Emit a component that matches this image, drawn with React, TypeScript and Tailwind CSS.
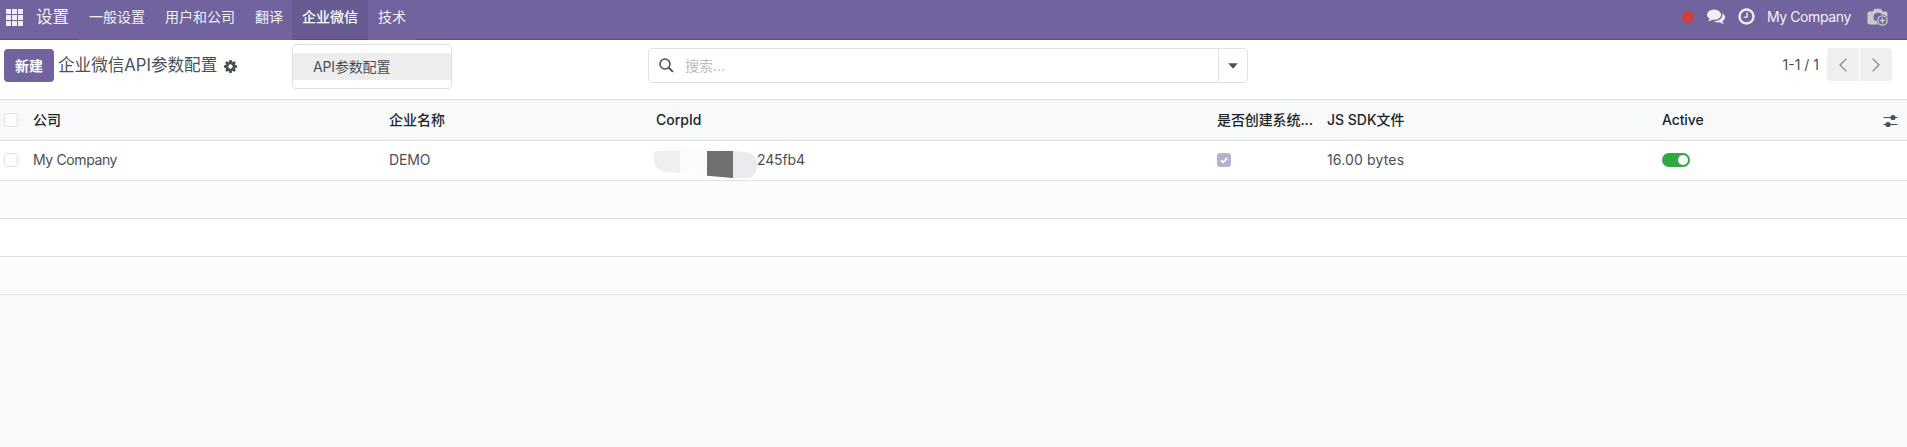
import React from "react";

const COMMENTS =
  "M1408 768q0 139-94 257t-256.5 186.5-353.5 68.5q-86 0-176-16-124 88-278 128-36 9-86 16h-3q-11 0-20.5-8t-11.5-21q-1-3-1-6.5t.5-6.5 2-6l2.5-5 3.5-5.5 4-5 4.5-5 4-4.5q5-6 23-25t26-29.5 22.5-29 25-38.5 20.5-44q-124-72-195-177t-71-224q0-139 94-257t256.5-186.5 353.5-68.5 353.5 68.5 256.5 186.5 94 257zm384 256q0 120-71 224.5t-195 176.5q10 24 20.5 44t25 38.5 22.5 29 26 29.5 23 25q1 1 4 4.5t4.5 5 4 5 3.5 5.5l2.5 5 2 6 .5 6.5-1 6.5q-3 14-13 22t-22 7q-50-7-86-16-154-40-278-128-90 16-176 16-271 0-472-132 58 4 88 4 161 0 309-45t264-129q125-92 192-212t67-254q0-77-23-152 129 71 204 178t75 230z";
const CLOCK =
  "M1024 544v448q0 14-9 23t-23 9h-320q-14 0-23-9t-9-23v-64q0-14 9-23t23-9h224v-352q0-14 9-23t23-9h64q14 0 23 9t9 23zm416 352q0-148-73-273t-198-198-273-73-273 73-198 198-73 273 73 273 198 198 273 73 273-73 198-198 73-273zm224 0q0 209-103 385.5t-279.5 279.5-385.5 103-385.5-103-279.5-279.5-103-385.5 103-385.5 279.5-279.5 385.5-103 385.5 103 279.5 279.5 103 385.5z";
const COG =
  "M1152 896q0-106-75-181t-181-75-181 75-75 181 75 181 181 75 181-75 75-181zm512-109v222q0 12-8 23t-20 13l-185 28q-19 54-39 91 35 50 107 138 10 12 10 25t-9 23q-27 37-99 108t-94 71q-12 0-26-9l-138-108q-44 23-91 38-16 136-29 186-7 28-36 28h-222q-14 0-24.5-8.5t-11.5-21.5l-28-184q-49-16-90-37l-141 107q-10 9-25 9-14 0-25-11-126-114-165-168-7-10-7-23 0-12 8-23 15-21 51-66.5t54-70.5q-27-50-41-99l-183-27q-13-2-21-12.5t-8-23.5v-222q0-12 8-23t19-13l186-28q14-46 39-92-40-57-107-138-10-12-10-24 0-10 9-23 26-36 98.5-107.5t94.5-71.5q13 0 26 10l138 107q44-23 91-38 16-136 29-186 7-28 36-28h222q14 0 24.5 8.5t11.5 21.5l28 184q49 16 90 37l142-107q9-9 24-9 13 0 25 10 129 119 165 170 7 8 7 22 0 12-8 23-15 21-51 66.5t-54 70.5q26 50 41 98l183 28q13 2 21 12.5t8 23.5z";

function Checkbox() {
  return <span className="block size-3.5 rounded-[3px] border border-[#dee2e6] bg-white" />;
}

function Navbar() {
  return (
    <header className="flex h-10 bg-[#71639e] text-[#f3f1f7]">
      <div className="flex w-[79px] border-b border-[#5a4f7f] pl-1.5">
        <svg className="mt-[9px] size-[17px] shrink-0" viewBox="0 0 17 17" fill="#f0eef5">
          {[0, 6, 12].map((y) =>
            [0, 6, 12].map((x) => <rect key={`${x}-${y}`} x={x} y={y} width="5" height="5" />)
          )}
        </svg>
        <span className="ml-[13px] pt-[5px] text-[16.5px] leading-6 whitespace-nowrap">设置</span>
      </div>
      <nav className="flex text-sm leading-[34px] whitespace-nowrap">
        <a className="px-2.5">一般设置</a>
        <a className="px-2.5">用户和公司</a>
        <a className="pr-[9px] pl-2.5">翻译</a>
        <div className="relative">
          <a className="block h-10 border-b border-[#5a4f7f] bg-[#685b92] px-2.5 font-medium text-white">企业微信</a>
          <div className="absolute top-11 left-0 w-40 rounded-[4px] border border-[#dee2e6] bg-white py-2 text-[#495057]">
            <div className="h-[27px] bg-[#ededed] pl-5 leading-7 tracking-[-0.15px]">API参数配置</div>
          </div>
        </div>
        <a className="px-2.5">技术</a>
      </nav>
      <div className="flex flex-1 justify-end border-b border-[#5a4f7f] pr-[18px] text-sm leading-[34px]">
        <span className="mt-[11px] size-3 rounded-full bg-[#d23f3a]" />
        <svg className="mt-[7px] ml-[13px] size-[18px]" viewBox="0 0 1792 1792" fill="#f0eef5"><path d={COMMENTS} /></svg>
        <svg className="mt-[7px] ml-3 size-[19px]" viewBox="0 0 1792 1792" fill="#f0eef5"><path d={CLOCK} /></svg>
        <span className="mr-px ml-[11px] tracking-[-0.38px]">My Company</span>
        <svg className="mt-[7px] ml-[15px] h-5 w-[22px]" viewBox="0 0 22 20">
          <path d="M2.500 4.500h3.200l1.300-2.100Q7.500 1.800 8.200 1.800h5q.7 0 1.100.6l1.400 2.100h2.800q2 0 2 2V15.500q0 2-2 2h-16q-2 0-2-2V6.500q0-2 2-2z" fill="#cacaca" />
          <path d="M7.400 13.200a4.300 4.300 0 0 1 7.500-5.700l-.8 1a5.500 5.500 0 0 0-4 5.800z" fill="#71639e" />
          <path d="M10 13.800a5.500 5.500 0 0 1 1.800-4.700q-2.400 1.800-1.800 4.700z" fill="#cacaca" />
          <circle cx="15.500" cy="13.500" r="5.900" fill="#71639e" />
          <circle cx="15.500" cy="13.500" r="4.700" fill="none" stroke="#cacaca" strokeWidth="1.300" />
          <path d="M15.500 10.700v5.600M12.700 13.500h5.600" stroke="#cacaca" strokeWidth="1.400" />
        </svg>
      </div>
    </header>
  );
}

function ControlPanel() {
  return (
    <section className="flex h-[59px] bg-white">
      <div className="flex w-[648px] pl-1">
        <button className="mt-[9px] h-[33px] w-[50px] rounded-[4px] bg-[#71639e] text-sm font-semibold text-white">新建</button>
        <h1 className="ml-1 pt-[13px] text-[16.6px] leading-6 whitespace-nowrap">企业微信API参数配置</h1>
        <svg className="mt-5 ml-[7px] size-[13px]" viewBox="128 128 1536 1536" fill="#495057"><path d={COG} /></svg>
      </div>
      <div className="mt-2 flex h-[35px] w-[600px] rounded-[4px] border border-[#dee2e6]">
        <div className="flex flex-1 pl-2.5">
          <svg className="mt-[9px] size-[15px]" viewBox="0 0 15 15" fill="none" stroke="#495057">
            <circle cx="6" cy="6" r="5" strokeWidth="1.500" />
            <path d="M9.600 9.600l4.300 4.300" strokeWidth="2" />
          </svg>
          <span className="ml-[11px] text-sm leading-[34px] text-[#b9bec4]">搜索...</span>
        </div>
        <div className="flex w-[29px] border-l border-[#dee2e6]">
          <svg className="mt-3.5 ml-[9px] h-[6px] w-[10px]" viewBox="0 0 9 5" fill="#495057"><path d="M.2 0h8.600L4.500 5z" /></svg>
        </div>
      </div>
      <div className="flex flex-1 justify-end pr-[15px]">
        <span className="mt-[15px] text-sm leading-5">1-1 / 1</span>
        <div className="mt-2 ml-2 flex h-[33px] gap-px overflow-hidden rounded-[4px] [&>span]:flex [&>span]:w-8 [&>span]:items-center [&>span]:justify-center [&>span]:bg-[#eeeff1]">
          <span>
            <svg className="h-3.5 w-2" viewBox="0 0 8 14" fill="none" stroke="#85898e" strokeWidth="1.300"><path d="M7.400.6L1 7l6.400 6.400" /></svg>
          </span>
          <span>
            <svg className="h-3.5 w-2" viewBox="0 0 8 14" fill="none" stroke="#85898e" strokeWidth="1.300"><path d="M.6.6L7 7 .6 13.400" /></svg>
          </span>
        </div>
      </div>
    </section>
  );
}

const COLS = "grid grid-cols-[33px_356px_267px_561px_110px_335px_1fr] items-center text-sm";

function RecordList() {
  return (
    <main>
      <div className={`${COLS} h-[42px] border-y border-[#dee2e6] bg-[#f8f9fb] font-medium text-[#212529] whitespace-nowrap`}>
        <span className="pl-1"><Checkbox /></span>
        <span>公司</span>
        <span>企业名称</span>
        <span>CorpId</span>
        <span className="tracking-[-0.1px]">是否创建系统...</span>
        <span>JS SDK文件</span>
        <span className="flex items-center justify-between pr-[9px] tracking-[-0.1px]">
          Active
          <svg className="mt-0.5 h-3.5 w-[15px]" viewBox="0 0 15 14" fill="#495057">
            <path d="M.5 3.500h14M.5 10.500h14" stroke="#495057" strokeWidth="1.200" />
            <circle cx="10" cy="3.500" r="2.600" />
            <circle cx="5" cy="10.500" r="2.600" />
          </svg>
        </span>
      </div>
      <div className={`${COLS} h-10 border-b border-[#dee2e6] bg-white whitespace-nowrap`}>
        <span className="-mt-0.5 pl-1"><Checkbox /></span>
        <span className="-mt-0.5 tracking-[-0.38px]">My Company</span>
        <span className="-mt-0.5 tracking-[-0.1px]">DEMO</span>
        <span className="relative -mt-0.5 pl-[101px] tracking-[-0.15px]">
          245fb4
          <svg className="absolute -top-[5px] -left-[3px] h-[34px] w-[106px]" viewBox="0 0 106 34">
            <path d="M12 0L92 6.500q12 2 12.500 13-.5 8.500-9 13.500H80L12 26.500Q1 25 .5 13 1 1 12 0z" fill="#fcfcfd" />
            <path d="M1.800 6H27v22L12 26.700Q.5 24 .6 12.500q.1-4 1.200-6.500z" fill="#efeff1" />
            <path d="M54 6h26v27l-26-2.200z" fill="#707070" />
            <path d="M80 6l12 1q12 2 12.800 13-1 9-8 13H80z" fill="#ebebed" />
          </svg>
        </span>
        <span>
          <svg className="-mt-0.5 size-3.5" viewBox="0 0 14 14">
            <rect width="14" height="14" rx="3" fill="#b8b1ce" />
            <path d="M4 7.300l2.100 2.100L10.200 5" fill="none" stroke="#fff" strokeWidth="1.700" />
          </svg>
        </span>
        <span className="-mt-0.5 tracking-[0.15px]">16.00 bytes</span>
        <span>
          <span className="-mt-0.5 flex h-3.5 w-7 items-center justify-end rounded-full bg-[#2fa943] pr-0.5">
            <span className="size-2.5 rounded-full bg-white" />
          </span>
        </span>
      </div>
      <div className="h-[38px] border-b border-[#dee2e6] bg-[#fcfcfc]" />
      <div className="h-[38px] border-b border-[#dee2e6] bg-white" />
      <div className="h-[38px] border-b border-[#dee2e6] bg-[#fcfcfc]" />
    </main>
  );
}

export default function App() {
  return (
    <div className="h-[447px] w-[1907px] overflow-hidden bg-[#f8f9fb] font-[Inter,'Noto_Sans_CJK_SC',sans-serif] text-[#495057]">
      <Navbar />
      <ControlPanel />
      <RecordList />
    </div>
  );
}
